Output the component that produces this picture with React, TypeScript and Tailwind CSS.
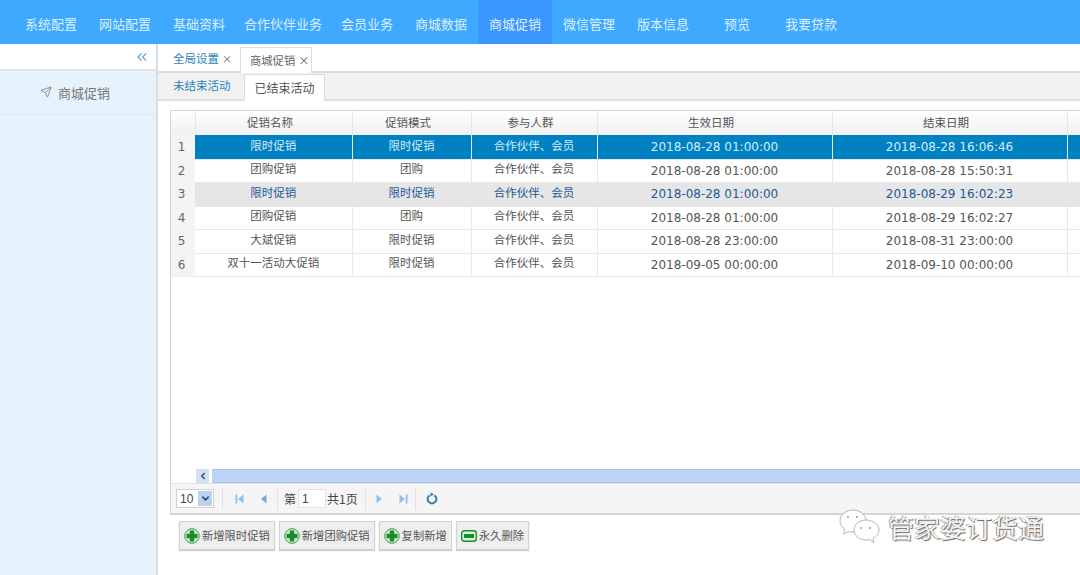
import { ChevronDown, ChevronLeft, ChevronsLeft, Send } from "lucide-react";

const navItems = ["系统配置", "网站配置", "基础资料", "合作伙伴业务", "会员业务", "商城数据", "商城促销", "微信管理", "版本信息", "预览", "我要贷款"];

const columns = [
  { title: "促销名称", width: "w-[157px]" },
  { title: "促销模式", width: "w-[119px]" },
  { title: "参与人群", width: "w-[126px]" },
  { title: "生效日期", width: "w-[235px]" },
  { title: "结束日期", width: "w-[235px]" },
];

const rows = [
  { id: 1, h: "h-[24px]", name: "限时促销", mode: "限时促销", start: "2018-08-28 01:00:00", end: "2018-08-28 16:06:46", state: "selected" },
  { id: 2, h: "h-[23px]", name: "团购促销", mode: "团购", start: "2018-08-28 01:00:00", end: "2018-08-28 15:50:31", state: "" },
  { id: 3, h: "h-[24px]", name: "限时促销", mode: "限时促销", start: "2018-08-28 01:00:00", end: "2018-08-29 16:02:23", state: "checked" },
  { id: 4, h: "h-[23px]", name: "团购促销", mode: "团购", start: "2018-08-28 01:00:00", end: "2018-08-29 16:02:27", state: "" },
  { id: 5, h: "h-[24px]", name: "大斌促销", mode: "限时促销", start: "2018-08-28 23:00:00", end: "2018-08-31 23:00:00", state: "" },
  { id: 6, h: "h-[23px]", name: "双十一活动大促销", mode: "限时促销", start: "2018-09-05 00:00:00", end: "2018-09-10 00:00:00", state: "" },
];

function rowClass(state: string) {
  if (state === "selected") return "bg-[#0081c2] text-[#d5ecfa]";
  if (state === "checked") return "bg-[#e6e6e6] text-[#1d5a96]";
  return "bg-white text-[#555]";
}

function PlusIcon() {
  return (
    <svg width="16" height="16" viewBox="0 0 16 16" className="shrink-0">
      <circle cx="8" cy="8" r="7.300" fill="#d4ecd4" stroke="#3f9d4f" strokeWidth="1" />
      <path d="M5.800 2.500h4.400v3.300h3.300v4.400h-3.300v3.300H5.800v-3.300H2.500V5.800h3.300z" fill="#1c8a2e" />
    </svg>
  );
}

function MinusIcon() {
  return (
    <svg width="16" height="12" viewBox="0 0 16 12" className="shrink-0">
      <rect x="0.700" y="0.700" width="14.600" height="10.600" rx="2.500" fill="#d8f5d8" stroke="#1f8a30" strokeWidth="1.400" />
      <rect x="3" y="4" width="10" height="4" fill="#1c8a2e" />
    </svg>
  );
}

function PagerArrow({ kind, color }: { kind: "first" | "prev" | "next" | "last"; color: string }) {
  const left = kind === "first" || kind === "prev";
  const bar = kind === "first" || kind === "last";
  return (
    <svg width="10" height="12" viewBox="0 0 10 12" fill={color}>
      {left ? <path d="M8.500 1.500v9L3 6z" /> : <path d="M1.500 1.500v9L7 6z" />}
      {bar && (left ? <rect x="0.500" y="1.500" width="1.800" height="9" /> : <rect x="7.700" y="1.500" width="1.800" height="9" />)}
    </svg>
  );
}

function ActionButton({ label, minus }: { label: string; minus?: boolean }) {
  return (
    <button className="flex h-[29px] items-center gap-[2px] border border-[#d2d2d2] bg-[#eeeeee] px-[4px] text-[11.300px] text-[#555] shadow-[0_1px_1px_#ccc]">
      {minus ? <MinusIcon /> : <PlusIcon />}
      {label}
    </button>
  );
}

export default function App() {
  return (
    <div className="relative flex h-[575px] w-[1080px] flex-col overflow-hidden bg-white font-['Noto_Sans_CJK_SC','Liberation_Sans',sans-serif]">
      {/* top menu */}
      <header className="flex h-[44px] shrink-0 bg-[#3fa9ff] pl-[14px] text-[13px] text-[#dcefff]">
        {navItems.map((item) => (
          <div
            key={item}
            className={`flex items-center justify-center pt-[3px] ${item === "合作伙伴业务" ? "w-[94px]" : "w-[74px]"} ${item === "商城促销" ? "bg-[#3c96ff]" : ""}`}
          >
            {item}
          </div>
        ))}
      </header>

      <div className="flex min-h-0 flex-1">
        {/* left menu */}
        <aside className="flex w-[158px] shrink-0 flex-col border-r-2 border-[#d9dde0] bg-[#e6f2fc]">
          <div className="flex h-[27px] items-center justify-end border-b-2 border-[#e2e4e6] bg-white pr-[6px] text-[#5a9fd8]">
            <ChevronsLeft size={16} strokeWidth={1.600} />
          </div>
          <div className="flex h-[44px] items-center justify-center gap-[6px] border-b border-[#ddeaf5] pr-[6px] pt-[1px] text-[13px] text-[#777]">
            <Send size={12} strokeWidth={1.500} className="mb-[3px]" />
            商城促销
          </div>
        </aside>

        <main className="flex min-w-0 flex-1 flex-col">
          {/* page tabs */}
          <div className="flex h-[29px] shrink-0 items-end border-b-2 border-[#dcdcdc] pl-[15px]">
            <div className="flex h-[25px] w-[67px] items-center gap-[3px] text-[11.500px] text-[#2b83b8]">
              全局设置 <span className="text-[10px] text-[#667]">×</span>
            </div>
            <div className="-mb-[2px] flex h-[26px] w-[72px] items-center gap-[3px] border border-b-0 border-[#dcdcdc] bg-white pl-[9px] text-[11.300px] text-[#666]">
              商城促销 <span className="text-[#667]">×</span>
            </div>
          </div>

          {/* sub tabs */}
          <div className="flex h-[28px] shrink-0 items-end border-b-2 border-[#e2e2e2] bg-[#f1f1f1] pl-[15px]">
            <div className="flex h-[26px] w-[71px] items-center text-[11.500px] text-[#2b83b8]">未结束活动</div>
            <div className="-mb-[2px] flex h-[27px] w-[81px] items-center justify-center border border-b-0 border-[#dcdcdc] bg-white text-[12px] text-[#555]">
              已结束活动
            </div>
          </div>

          {/* grid */}
          <div className="ml-[12px] mt-[9px] flex h-[405px] shrink-0 flex-col border-b-2 border-l border-t border-[#d4d4d4]">
            <div className="min-h-0 flex-1 overflow-hidden">
              <table className="w-[916px] table-fixed border-collapse text-[11.500px]">
                <thead>
                  <tr className="h-[24px] bg-[linear-gradient(180deg,#ffffff,#f0f0f0)] text-[#555]">
                    <th className="w-[24px] border-r border-[#e6e6e6] font-normal" />
                    {columns.map((col) => (
                      <th key={col.title} className={`${col.width} border-r border-[#e6e6e6] pr-[7px] text-center font-normal`}>
                        {col.title}
                      </th>
                    ))}
                    <th className="w-[20px] font-normal" />
                  </tr>
                </thead>
                <tbody>
                  {rows.map((row) => (
                    <tr key={row.id} className={row.h}>
                      <td className="border-b border-[#f0f0f0] bg-[#f4f4f4] pr-[3px] text-center font-['DejaVu_Sans',sans-serif] text-[12px] text-[#666]">
                        {row.id}
                      </td>
                      {[row.name, row.mode, "合作伙伴、会员"].map((text, i) => (
                        <td key={i} className={`border-b border-r border-[#e8e8e8] pb-[3px] text-center ${rowClass(row.state)}`}>
                          {text}
                        </td>
                      ))}
                      {[row.start, row.end].map((text, i) => (
                        <td key={i} className={`border-b border-r border-[#e8e8e8] text-center font-['DejaVu_Sans',sans-serif] text-[12px] ${rowClass(row.state)}`}>
                          {text}
                        </td>
                      ))}
                      <td className={`border-b border-[#e8e8e8] ${rowClass(row.state)}`} />
                    </tr>
                  ))}
                </tbody>
              </table>
            </div>

            {/* horizontal scrollbar */}
            <div className="ml-[25px] flex h-[14px] shrink-0 items-stretch gap-[3px]">
              <div className="flex w-[13px] items-center justify-center bg-[#d4e0f2] text-[#23476f]">
                <ChevronLeft size={10} strokeWidth={3.500} />
              </div>
              <div className="flex-1 border-y border-[#a9c2e8] bg-[#bdd3f5]" />
            </div>

            {/* pager */}
            <div className="flex h-[30px] shrink-0 items-center border-t border-[#dde3ea] bg-[#f5f5f5] pl-[5px] text-[12px] text-[#444]">
              <div className="flex h-[19px] w-[38px] items-center justify-between border border-[#d0d0d0] bg-white pl-[3px] pr-[1px]">
                <span className="font-['Liberation_Sans',sans-serif]">10</span>
                <span className="flex h-[15px] w-[14px] items-center justify-center bg-[#bcd2ef] text-[#2b4d80]">
                  <ChevronDown size={11} strokeWidth={3.500} />
                </span>
              </div>
              <div className="ml-[8px] mr-[7px] h-[22px] w-px bg-[#e2e2e2]" />
              <div className="flex w-[44px] items-center gap-[13px] pl-[5px]">
                <PagerArrow kind="first" color="#8fc0ea" />
                <PagerArrow kind="prev" color="#7aa9d2" />
              </div>
              <div className="ml-[3px] mr-[6px] h-[22px] w-px bg-[#e2e2e2]" />
              <span>第</span>
              <span className="ml-[2px] mr-[1px] flex h-[19px] w-[28px] items-center border border-[#e2e2e2] bg-white pl-[3px] font-['Liberation_Sans',sans-serif]">1</span>
              <span>共1页</span>
              <div className="ml-[7px] mr-[9px] h-[22px] w-px bg-[#e2e2e2]" />
              <div className="flex items-center gap-[13px]">
                <PagerArrow kind="next" color="#8fc0ea" />
                <PagerArrow kind="last" color="#8fc0ea" />
              </div>
              <div className="ml-[7px] mr-[10px] h-[22px] w-px bg-[#e2e2e2]" />
              <svg width="12" height="13" viewBox="0 0 12 13" fill="none">
                <path d="M3.500 3.400a4.400 4.400 0 1 0 5 0" stroke="#2b7fb8" strokeWidth="2" />
                <path d="M4.500 0.500 8 2.500 4.500 4.500z" fill="#2b7fb8" />
              </svg>
            </div>
          </div>

          {/* actions */}
          <div className="ml-[21px] mt-[6px] flex gap-[4px]">
            <ActionButton label="新增限时促销" />
            <ActionButton label="新增团购促销" />
            <ActionButton label="复制新增" />
            <ActionButton label="永久删除" minus />
          </div>
        </main>
      </div>

      {/* watermark */}
      <div className="absolute left-[839px] top-[509px] flex items-center gap-[8px]">
        <svg width="41" height="35" viewBox="0 0 41 35" fill="#ffffff" stroke="#b5b5b5" strokeWidth="1">
          <path d="M14 1C7 1 1 5.500 1 12c0 3.500 2 6.500 5 8.500L4.500 25l5-2.500c1.500.4 3 .6 4.500.6 8 0 13-5 13-11S21 1 14 1z" />
          <path d="M27 11c-6.500 0-12 4.300-12 10s5.500 10 12 10c1.300 0 2.500-.2 3.700-.5L35 34l-1-4.500c3.500-2 6-5 6-8.500 0-5.700-6.500-10-13-10z" />
          <circle cx="22" cy="19" r="1" fill="#999" stroke="none" />
          <circle cx="31" cy="19" r="1" fill="#999" stroke="none" />
          <circle cx="9" cy="8" r="1" fill="#999" stroke="none" />
          <circle cx="18" cy="8" r="1" fill="#999" stroke="none" />
        </svg>
        <span className="text-[26px] leading-none text-[#f4f4f4] [text-shadow:1px_1px_1px_#666,-1px_0_0_#999]">管家婆订货通</span>
      </div>
    </div>
  );
}
